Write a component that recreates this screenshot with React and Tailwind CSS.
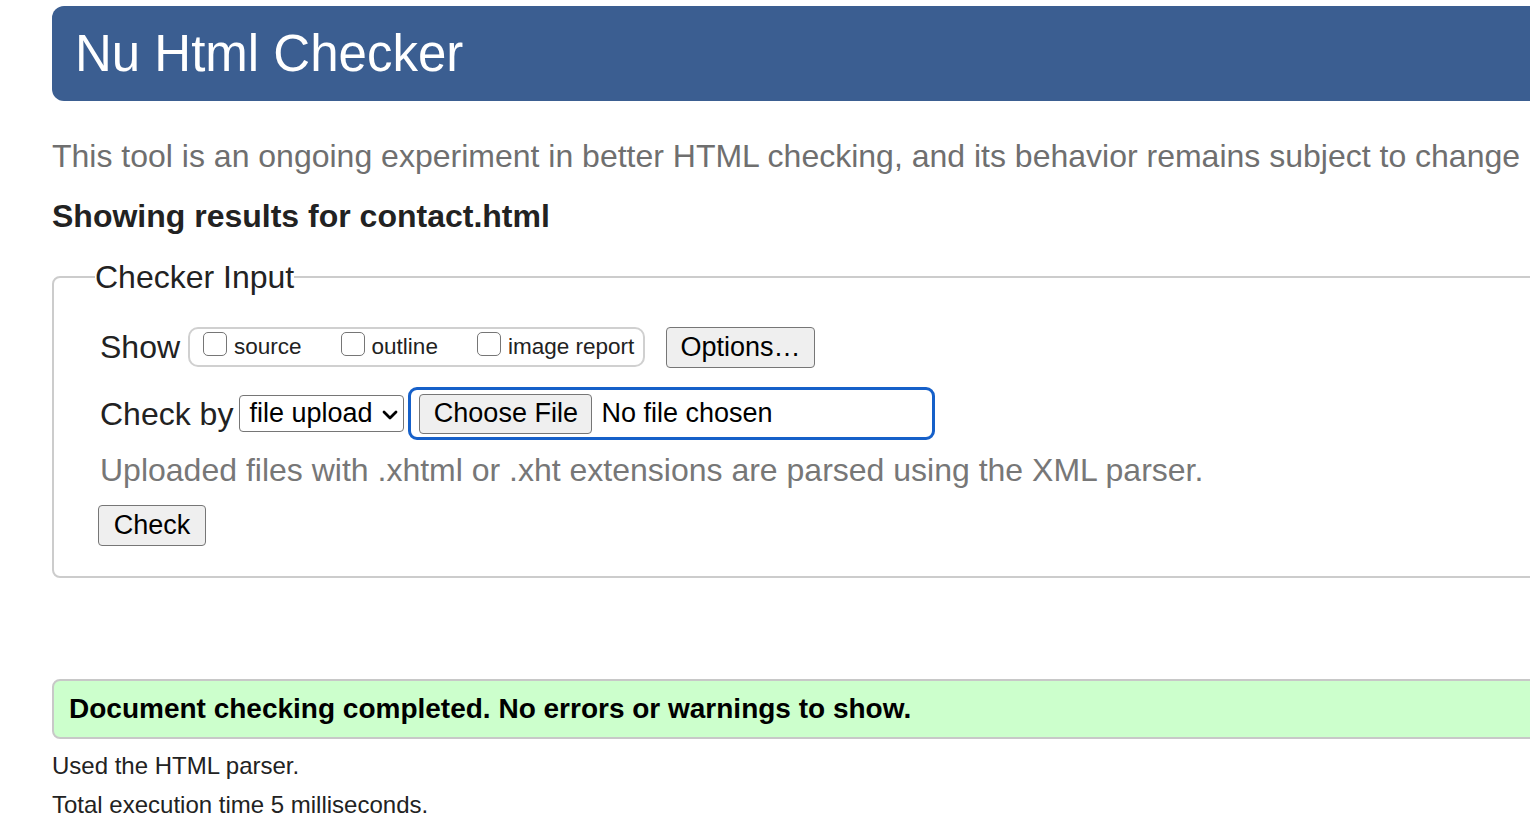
import React from 'react';

const Box = () => (
  <span className="inline-block w-[24px] h-[24px] border-[1.5px] border-[#767676] rounded-[5px] bg-white self-start mt-[2px]"></span>
);

const App = () => {
  return (
    <div className="w-[1530px] h-[826px] overflow-hidden bg-white text-[#222] font-['Liberation_Sans',Arial,sans-serif]">
      <div className="pl-[52px] w-[1700px]">
        {/* Cabeçalho */}
        <div className="mt-[6px] h-[95px] bg-[#3b5e91] rounded-l-[12px] flex items-center pl-[23px]">
          <h1 className="text-white text-[51px] leading-none">Nu Html Checker</h1>
        </div>

        <p className="mt-[35px] h-[40px] leading-[40px] text-[32px] text-[#6f6f6f] whitespace-nowrap">
          This tool is an ongoing experiment in better HTML checking, and its behavior remains subject to change
        </p>

        <h2 className="mt-[20px] h-[40px] leading-[40px] text-[32px] font-bold text-[#222]">
          Showing results for contact.html
        </h2>

        <fieldset className="mt-[21px] border-2 border-[#cccccc] rounded-[8px] pl-[46px] pb-[30px]">
          <legend className="-ml-[5px] h-[40px] leading-[40px] text-[32px] text-[#222]">Checker Input</legend>

          {/* Show */}
          <div className="mt-[29px] h-[42px] flex items-center">
            <span className="text-[32px] text-[#222] mr-[8px]">Show</span>
            <div className="h-[40px] w-[457px] border-2 border-[#d0d0d0] rounded-[10px] flex items-center pl-[13px]">
              <label className="flex items-center gap-[7px] text-[22.5px] text-[#222] mr-[39px]">
                <Box />source
              </label>
              <label className="flex items-center gap-[7px] text-[22.5px] text-[#222] mr-[39px]">
                <Box />outline
              </label>
              <label className="flex items-center gap-[7px] text-[22.5px] text-[#222]">
                <Box />image report
              </label>
            </div>
            <button className="ml-[21px] h-[41px] w-[149px] bg-[#efefef] border-[1.5px] border-[#767676] rounded-[4px] text-[27px] text-black leading-none">
              Options…
            </button>
          </div>

          {/* Check by */}
          <div className="mt-[19px] h-[53px] flex items-center">
            <span className="text-[32px] text-[#222] mr-[6px]">Check by</span>
            <div className="h-[37px] w-[165px] border-[1.5px] border-[#767676] rounded-[4px] bg-white flex items-center pl-[9px] pr-[5px] justify-between">
              <span className="text-[27px] text-black leading-none">file upload</span>
              <svg width="16" height="12" viewBox="0 0 16 12" className="mt-[2px]">
                <path d="M2 3 L8 9 L14 3" fill="none" stroke="#000" strokeWidth="2.8" strokeLinecap="round" strokeLinejoin="round" />
              </svg>
            </div>
            <div className="ml-[4px] h-[53px] w-[527px] border-[3px] border-[#1660c9] rounded-[9px] flex items-center pl-[8px]">
              <button className="h-[40px] w-[173px] bg-[#efefef] border-[1.5px] border-[#767676] rounded-[4px] text-[27px] text-black leading-none">
                Choose File
              </button>
              <span className="ml-[9px] text-[27px] text-black">No file chosen</span>
            </div>
          </div>

          <p className="mt-[10px] h-[40px] leading-[40px] text-[32px] text-[#777777] whitespace-nowrap">
            Uploaded files with .xhtml or .xht extensions are parsed using the XML parser.
          </p>

          <button className="mt-[15px] h-[41px] w-[108px] -ml-[2px] bg-[#efefef] border-[1.5px] border-[#767676] rounded-[4px] text-[27px] text-black leading-none block">
            Check
          </button>
        </fieldset>

        {/* Resultado */}
        <div className="mt-[101px] h-[60px] bg-[#ccffcc] border-2 border-[#c8c8c8] rounded-l-[8px] flex items-center pl-[15px]">
          <span className="text-[28px] font-bold text-black">Document checking completed. No errors or warnings to show.</span>
        </div>

        <p className="mt-[12px] h-[30px] leading-[30px] text-[24px] text-[#222]">Used the HTML parser.</p>
        <p className="mt-[9px] h-[30px] leading-[30px] text-[24px] text-[#222]">Total execution time 5 milliseconds.</p>
      </div>
    </div>
  );
};

export default App;
